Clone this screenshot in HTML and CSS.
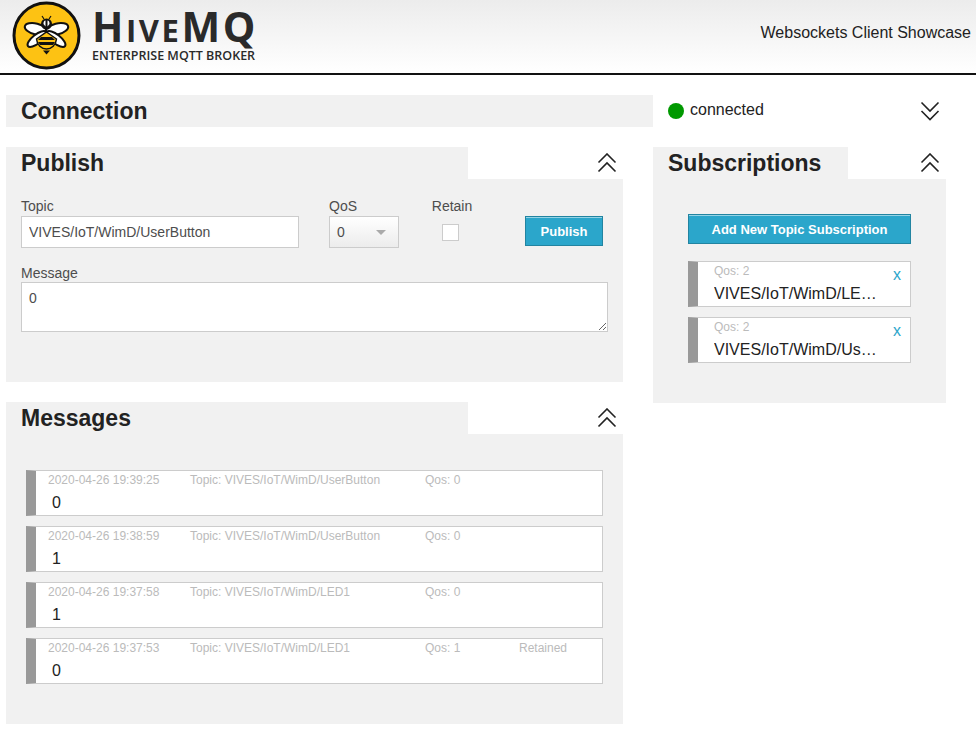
FILE: index.html
```html
<!DOCTYPE html>
<html lang="en">
<head>
    <meta charset="UTF-8">
    <meta name="viewport" content="width=device-width, initial-scale=1.0">
    <title>HiveMQ Websockets Client Showcase</title>
    <link rel="stylesheet" href="styles.css">
</head>
<body>
    <!-- Header -->
    <header class="site-header">
        <div class="logo">
            <svg class="logo-mark" width="72" height="72" viewBox="0 0 72 72">
                <circle cx="34.5" cy="34.5" r="32.5" fill="#fdc213" stroke="#111" stroke-width="3"/>
                <g stroke="#111" stroke-width="2" fill="#fff">
                    <ellipse cx="24" cy="28" rx="11.500" ry="5.500" transform="rotate(14 24 28)"/>
                    <ellipse cx="45" cy="28" rx="11.500" ry="5.500" transform="rotate(-14 45 28)"/>
                    <ellipse cx="25" cy="38" rx="11.500" ry="4.500" transform="rotate(-38 25 38)"/>
                    <ellipse cx="44" cy="38" rx="11.500" ry="4.500" transform="rotate(38 44 38)"/>
                </g>
                <circle cx="34.5" cy="23" r="5.500" fill="#111"/>
                <path d="M31.500 23a2 3 0 0 1 2-3.500v6zM37.500 23a2 3 0 0 0-2-3.500v6z" fill="#fff"/>
                <path d="M32 18l-2-3M37 18l2-3" stroke="#111" stroke-width="1.2"/>
                <path d="M34.500 31l10 7c-.5 6-5 10-10 10s-9.500-4-10-10z" fill="#fdc213" stroke="#111" stroke-width="1.500"/>
                <path d="M29 36h11l3 3H26zM26 41h17l-2 3H28z" fill="#111"/>
                <path d="M31 49.500h7l-3.500 4z" fill="#111"/>
            </svg>
            <div class="logo-text">
                <div class="logo-name">H<small>IVE</small>MQ</div>
                <div class="logo-sub">ENTERPRISE MQTT BROKER</div>
            </div>
        </div>
        <div class="site-title">Websockets Client Showcase</div>
    </header>

    <main class="layout">
        <section class="connection-bar">
            <h2>Connection</h2>
        </section>
        <div class="status">
            <span class="status-dot"></span>
            <span class="status-text">connected</span>
            <svg class="chevrons" width="20" height="20" viewBox="0 0 20 20"><path d="M1.500 1.500L10 10l8.500-8.500M1.500 10l8.500 8.500L18.500 10"/></svg>
        </div>

        <div class="left-column">
            <section class="panel">
                <div class="panel-head">
                    <h2 class="panel-tab tab-wide">Publish</h2>
                    <svg class="chevrons" width="20" height="20" viewBox="0 0 20 20"><path d="M1.500 9.500L10 1l8.500 8.500M1.500 18.500L10 10l8.500 8.500"/></svg>
                </div>
                <div class="panel-body publish-body">
                    <div class="form-row">
                        <div class="field field-topic">
                            <label>Topic</label>
                            <input type="text" class="text-input" value="VIVES/IoT/WimD/UserButton">
                        </div>
                        <div class="field field-qos">
                            <label>QoS</label>
                            <div class="select-box">0</div>
                        </div>
                        <div class="field field-retain">
                            <label>Retain</label>
                            <input type="checkbox" class="check">
                        </div>
                        <button class="btn btn-publish">Publish</button>
                    </div>
                    <label class="message-label">Message</label>
                    <textarea class="message-input">0</textarea>
                </div>
            </section>

            <section class="panel">
                <div class="panel-head">
                    <h2 class="panel-tab tab-wide">Messages</h2>
                    <svg class="chevrons" width="20" height="20" viewBox="0 0 20 20"><path d="M1.500 9.500L10 1l8.500 8.500M1.500 18.500L10 10l8.500 8.500"/></svg>
                </div>
                <div class="panel-body messages-body">
                    <div class="msg">
                        <div class="msg-meta"><span class="m-date">2020-04-26 19:39:25</span><span class="m-topic">Topic: VIVES/IoT/WimD/UserButton</span><span class="m-qos">Qos: 0</span></div>
                        <div class="msg-value">0</div>
                    </div>
                    <div class="msg">
                        <div class="msg-meta"><span class="m-date">2020-04-26 19:38:59</span><span class="m-topic">Topic: VIVES/IoT/WimD/UserButton</span><span class="m-qos">Qos: 0</span></div>
                        <div class="msg-value">1</div>
                    </div>
                    <div class="msg">
                        <div class="msg-meta"><span class="m-date">2020-04-26 19:37:58</span><span class="m-topic">Topic: VIVES/IoT/WimD/LED1</span><span class="m-qos">Qos: 0</span></div>
                        <div class="msg-value">1</div>
                    </div>
                    <div class="msg">
                        <div class="msg-meta"><span class="m-date">2020-04-26 19:37:53</span><span class="m-topic">Topic: VIVES/IoT/WimD/LED1</span><span class="m-qos">Qos: 1</span><span>Retained</span></div>
                        <div class="msg-value">0</div>
                    </div>
                </div>
            </section>
        </div>

        <section class="panel">
            <div class="panel-head">
                <h2 class="panel-tab tab-narrow">Subscriptions</h2>
                <svg class="chevrons" width="20" height="20" viewBox="0 0 20 20"><path d="M1.500 9.500L10 1l8.500 8.500M1.500 18.500L10 10l8.500 8.500"/></svg>
            </div>
            <div class="panel-body subs-body">
                <button class="btn btn-add">Add New Topic Subscription</button>
                <div class="sub">
                    <div class="sub-qos">Qos: 2</div>
                    <div class="sub-topic">VIVES/IoT/WimD/LED1</div>
                    <a class="sub-close">x</a>
                </div>
                <div class="sub">
                    <div class="sub-qos">Qos: 2</div>
                    <div class="sub-topic">VIVES/IoT/WimD/UserButton</div>
                    <a class="sub-close">x</a>
                </div>
            </div>
        </section>
    </main>
</body>
</html>
```
FILE: styles.css
```css
body {
    margin: 0;
    font-family: "Liberation Sans", Arial, sans-serif;
    color: #222;
    background: #fff;
}

/* Header */
.site-header {
    height: 73px;
    border-bottom: 2px solid #111;
    background: linear-gradient(#ececec, #fff);
    display: flex;
    justify-content: space-between;
    align-items: center;
    padding: 0 5px 0 12px;
}

.logo {
    display: flex;
    align-items: center;
}

.logo-mark {
    flex: none;
}

.logo-text {
    margin: -2px 0 0 8px;
    color: #2a2a2a;
}

.logo-name {
    font-family: "Open Sans", sans-serif;
    font-weight: 700;
    font-size: 41px;
    line-height: 36px;
    letter-spacing: 2.6px;
}

.logo-name small {
    font-size: 31px;
}

.logo-sub {
    font-family: "Open Sans", sans-serif;
    font-weight: 600;
    font-size: 12.5px;
    line-height: 16px;
}

.site-title {
    font-size: 16px;
    margin-bottom: 7px;
}

/* Layout */
.layout {
    width: 940px;
    margin: 20px 0 0 6px;
    display: grid;
    grid-template-columns: 617px 30px 293px;
    grid-template-rows: 32px auto;
    row-gap: 20px;
}

.connection-bar {
    grid-column: 1 / 3;
    background: #f1f1f1;
    padding-left: 15px;
}

h2 {
    margin: 0;
    font-size: 23px;
    line-height: 32px;
    font-weight: 700;
    color: #222;
}

.status {
    display: flex;
    align-items: center;
    padding: 0 6px 0 15px;
    font-size: 16px;
}

.status-dot {
    width: 16px;
    height: 16px;
    border-radius: 50%;
    background: #090;
    margin-right: 6px;
}

.status-text {
    flex: 1;
    margin-top: -2px;
}

.left-column {
    display: flex;
    flex-direction: column;
    gap: 20px;
}

.layout > .panel:last-child {
    grid-column: 3;
    align-self: start;
}

/* Panels */
.panel-head {
    display: flex;
    justify-content: space-between;
    align-items: center;
    height: 32px;
    padding-right: 6px;
}

.panel-tab {
    background: #f1f1f1;
    padding-left: 15px;
    box-sizing: border-box;
    height: 32px;
}

.tab-wide {
    width: 462px;
}

.tab-narrow {
    width: 195px;
}

.chevrons {
    display: block;
}

.chevrons path {
    fill: none;
    stroke: #222;
    stroke-width: 1.6;
}

.panel-body {
    background: #f1f1f1;
    box-sizing: border-box;
}

/* Publish form */
.publish-body {
    height: 203px;
    padding: 18px 15px 0;
}

.form-row {
    display: flex;
}

.field label,
.message-label {
    display: block;
    font-size: 14px;
    line-height: 19px;
    color: #4d4d4d;
}

.field-topic {
    width: 278px;
    margin-right: 30px;
}

.field-qos {
    width: 70px;
    margin-right: 33px;
}

.field-retain {
    width: 42px;
    margin-right: 52px;
    margin-left: -1px;
    text-align: center;
}

.text-input {
    width: 100%;
    height: 32px;
    box-sizing: border-box;
    border: 1px solid #ccc;
    padding: 0 7px;
    font: 14px "Liberation Sans", Arial, sans-serif;
    color: #4d4d4d;
    background: #fff;
}

.select-box {
    position: relative;
    width: 70px;
    height: 32px;
    box-sizing: border-box;
    border: 1px solid #ccc;
    padding-left: 7px;
    font-size: 14px;
    line-height: 30px;
    color: #4d4d4d;
    background: linear-gradient(#fff, #ececec);
}

.select-box::after {
    content: "";
    position: absolute;
    right: 12px;
    top: 13px;
    border: 5px solid transparent;
    border-top: 5px solid #aaa;
    border-bottom: 0;
}

.check {
    appearance: none;
    display: block;
    width: 17px;
    height: 17px;
    margin: 8px 0 0 11px;
    box-sizing: border-box;
    border: 1px solid #ccc;
    background: #fff;
}

.btn {
    box-sizing: border-box;
    border: 1px solid #2284a1;
    box-shadow: inset 0 1px 0 rgba(255, 255, 255, 0.5);
    background: #2ba6cb;
    color: #fff;
    font: bold 13px "Liberation Sans", Arial, sans-serif;
    height: 30px;
    padding: 0;
    display: block;
}

.btn-publish {
    width: 78px;
    margin-top: 19px;
}

.message-label {
    margin-top: 16px;
    margin-bottom: -1px;
}

.message-input {
    display: block;
    width: 587px;
    height: 50px;
    box-sizing: border-box;
    border: 1px solid #ccc;
    padding: 7px;
    margin: 0;
    font: 14px "Liberation Sans", Arial, sans-serif;
    color: #4d4d4d;
    background: #fff;
}

/* Messages */
.messages-body {
    height: 290px;
    padding: 36px 20px 0;
    display: flex;
    flex-direction: column;
    gap: 10px;
}

.msg {
    box-sizing: border-box;
    height: 46px;
    background: #fff;
    border: 1px solid #ccc;
    border-left: 10px solid #999;
    padding: 2px 0 0 12px;
}

.msg-meta {
    display: flex;
    font-size: 12px;
    line-height: 14px;
    color: #bbb;
}

.m-date {
    width: 142px;
}

.m-topic {
    width: 235px;
}

.m-qos {
    width: 94px;
}

.msg-value {
    font-size: 16px;
    line-height: 18px;
    color: #222;
    margin: 7px 0 0 4px;
}

/* Subscriptions */
.subs-body {
    height: 224px;
    padding: 35px 35px 0;
}

.btn-add {
    width: 223px;
    margin-bottom: 17px;
}

.sub {
    position: relative;
    box-sizing: border-box;
    height: 46px;
    margin-bottom: 10px;
    background: #fff;
    border: 1px solid #ccc;
    border-left: 10px solid #999;
    padding: 2px 0 0 16px;
}

.sub-qos {
    font-size: 12px;
    line-height: 14px;
    color: #bbb;
}

.sub-topic {
    width: 164px;
    font-size: 16px;
    line-height: 18px;
    margin-top: 7px;
    color: #222;
    white-space: nowrap;
    overflow: hidden;
    text-overflow: ellipsis;
}

.sub-close {
    position: absolute;
    right: 9px;
    top: 4px;
    font-size: 16px;
    line-height: 18px;
    color: #2ba6cb;
}
```
